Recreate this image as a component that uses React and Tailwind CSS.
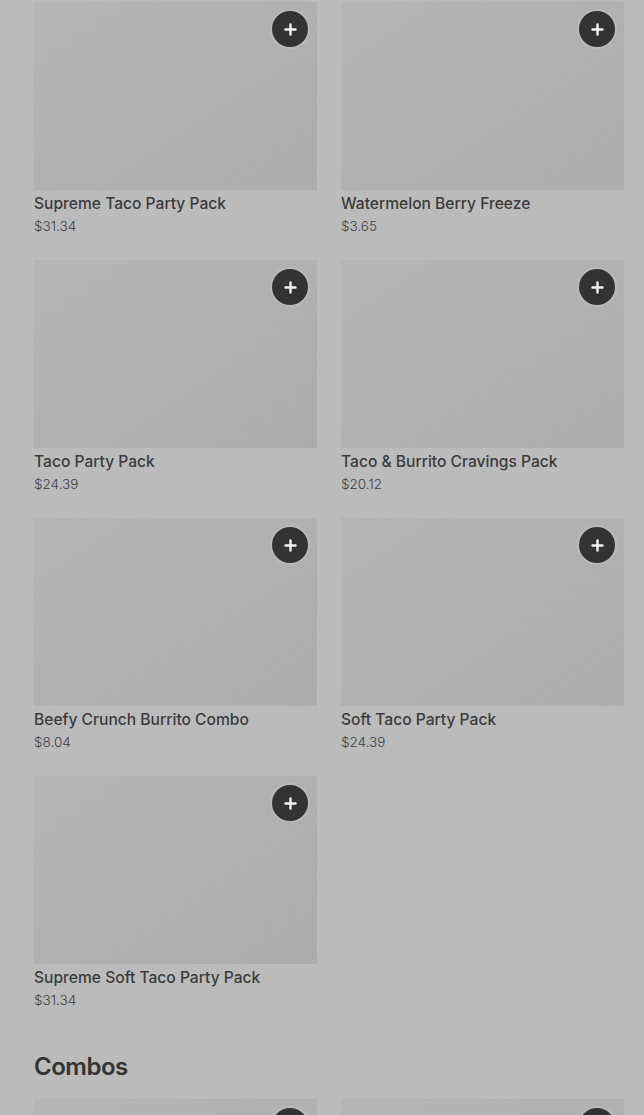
const items = [
  { name: 'Supreme Taco Party Pack', price: '$31.34' },
  { name: 'Watermelon Berry Freeze', price: '$3.65' },
  { name: 'Taco Party Pack', price: '$24.39' },
  { name: 'Taco & Burrito Cravings Pack', price: '$20.12' },
  { name: 'Beefy Crunch Burrito Combo', price: '$8.04' },
  { name: 'Soft Taco Party Pack', price: '$24.39' },
  { name: 'Supreme Soft Taco Party Pack', price: '$31.34' },
];

const combos = [
  { name: 'Combo One', price: '$9.99' },
  { name: 'Combo Two', price: '$9.99' },
];

function PlusIcon() {
  return (
    <svg width="13" height="13" viewBox="0 0 13 13" fill="none">
      <path d="M6.5 1.5v10M1.5 6.5h10" stroke="#f2f2f2" strokeWidth="2.4" strokeLinecap="round" />
    </svg>
  );
}

function Card({ name, price }) {
  return (
    <div className="flex flex-col">
      <div className="relative h-[188px] bg-gradient-to-br from-[#b5b5b5] to-[#acacac]">
        <button className="absolute top-[9px] right-[9px] flex h-9 w-9 items-center justify-center rounded-full bg-[#333333] shadow-[0_0_0_2px_rgba(255,255,255,0.12)]">
          <PlusIcon />
        </button>
      </div>
      <div className="mt-[2px] text-[15.6px] font-medium leading-6 text-[#3b3b3b]">{name}</div>
      <div className="text-[13.5px] font-light leading-5 text-[#3f3f3f]">{price}</div>
    </div>
  );
}

export default function App() {
  return (
    <div
      className="h-[1115px] overflow-hidden bg-[#bbbbbb] pl-[34px] pr-[20px] pt-[2px]"
      style={{ fontFamily: 'Inter, "Liberation Sans", sans-serif' }}
    >
      <div className="grid grid-cols-2 gap-x-6 gap-y-6">
        {items.map((it) => (
          <Card key={it.name} {...it} />
        ))}
      </div>

      <h2 className="mt-[41px] mb-4 text-[24px] font-semibold leading-8 tracking-[-0.5px] text-[#333333]">
        Combos
      </h2>

      <div className="grid grid-cols-2 gap-x-6 gap-y-6">
        {combos.map((it) => (
          <Card key={it.name} {...it} />
        ))}
      </div>
    </div>
  );
}
